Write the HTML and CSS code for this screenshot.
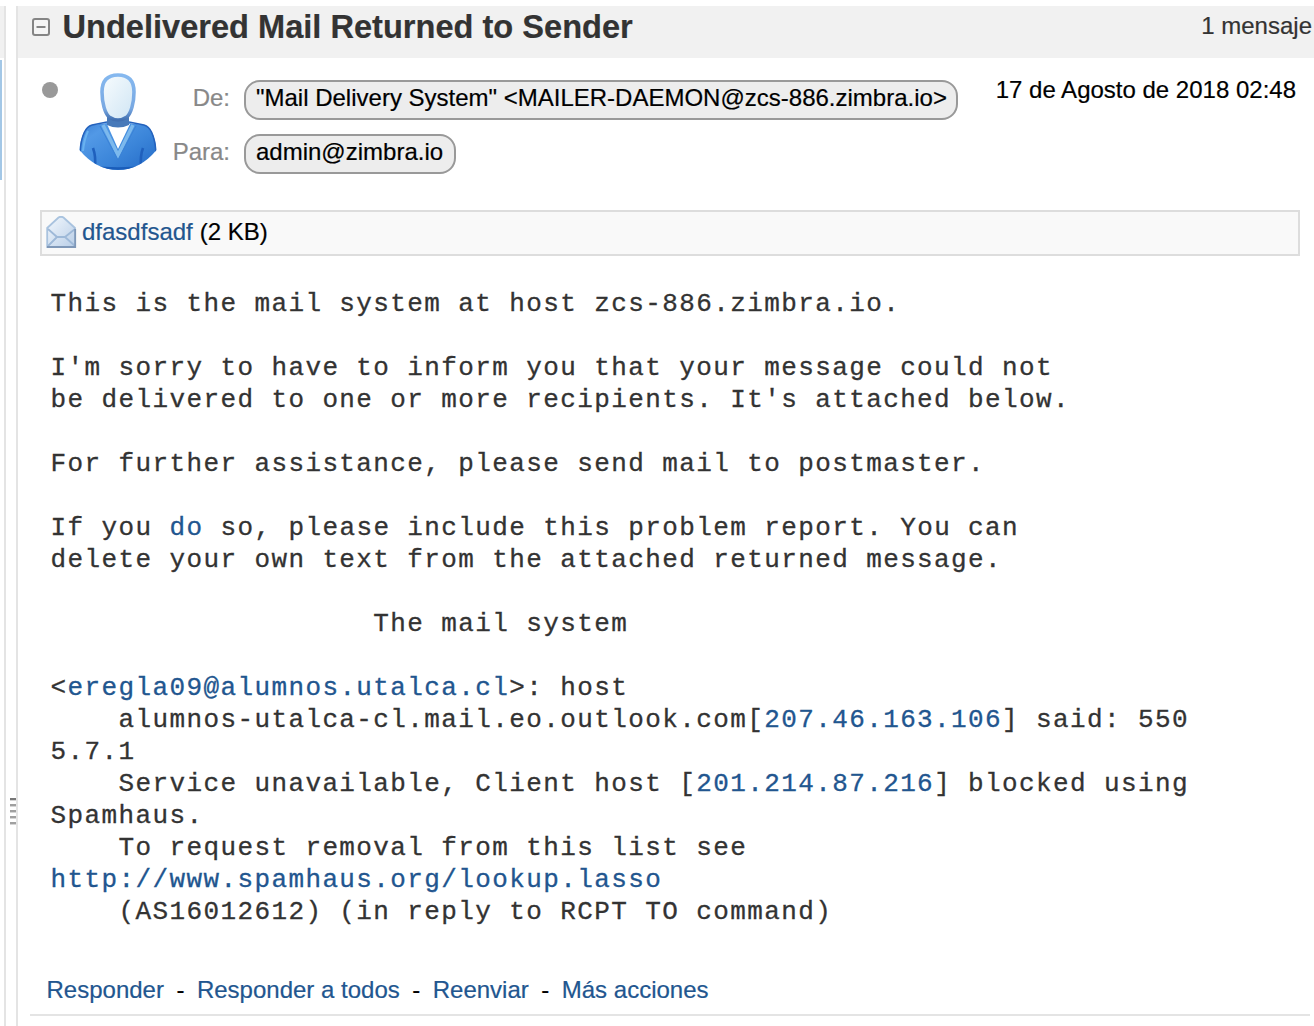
FILE: index.html
```html
<!DOCTYPE html>
<html lang="es">
<head>
<meta charset="utf-8">
<title>Undelivered Mail Returned to Sender</title>
<link rel="stylesheet" href="styles.css">
</head>
<body>
<div class="app">
  <aside class="list-edge">
    <div class="list-header"></div>
    <div class="list-selected"></div>
  </aside>
  <div class="sash"><div class="grip"><i></i><i></i><i></i><i></i><i></i></div></div>
  <main class="reader">
    <header class="subject-bar">
      <svg class="collapse" width="20" height="20" viewBox="0 0 20 20"><rect x="2" y="2" width="16" height="16" rx="2" fill="#f5f5f5" stroke="#858585" stroke-width="2"/><path d="M5.5 10h9" stroke="#858585" stroke-width="2"/></svg>
      <h1 class="subject">Undelivered Mail Returned to Sender</h1>
      <span class="count">1 mensaje</span>
    </header>
    <section class="envelope">
      <span class="read-dot"></span>
      <svg class="avatar" width="80" height="100" viewBox="0 0 80 100">
        <defs>
          <linearGradient id="suit" x1="0" y1="0" x2="1" y2="1"><stop offset="0" stop-color="#3679d0"/><stop offset=".25" stop-color="#5299e6"/><stop offset=".6" stop-color="#3b85d9"/><stop offset="1" stop-color="#2268c5"/></linearGradient>
          <linearGradient id="face" x1="0" y1="0" x2="1" y2="1"><stop offset="0" stop-color="#f8fcfe"/><stop offset="1" stop-color="#cfe5f4"/></linearGradient>
          <linearGradient id="rim" x1="0" y1="0" x2="0" y2="1"><stop offset="0" stop-color="#85b8ef"/><stop offset=".75" stop-color="#78a8e2"/><stop offset="1" stop-color="#416fb0"/></linearGradient>
          <clipPath id="bust"><path d="M1.5 0H78.5V78Q62 98 40 98Q18 98 1.5 78Z"/></clipPath>
        </defs>
        <g clip-path="url(#bust)">
          <path d="M29 46H51V51L66 53C74 55 78 68 79 82V100H1V82C2 68 6 55 14 53L29 51Z" fill="url(#suit)"/>
          <path d="M14 53L29 50M51 50L66 53C74 55 77 68 78 80M2 80C3 68 6 55 14 53" fill="none" stroke="#2462bd" stroke-width="1.6"/>
          <path d="M29 52L40 77L52 52Z" fill="#fff"/>
          <path d="M25 53L40 83L55 53" fill="none" stroke="#7cb9ed" stroke-width="3.5"/>
          <path d="M22 54L40 88L58 54" fill="none" stroke="#3a82d6" stroke-width="1"/>
          <path d="M15 76Q18 84 17 96M65 76Q62 84 63 96" fill="none" stroke="#1f60bd" stroke-width="2.6"/>
          <path d="M10 59Q6 68 5 79" fill="none" stroke="#68b2f0" stroke-width="2"/>
          <path d="M12 95Q40 98 68 95" fill="none" stroke="#1a5dba" stroke-width="2.5"/>
          <path d="M29 45H51V53Q40 58 29 53Z" fill="#4779b9"/>
        </g>
        <path d="M40 3C29 3 24 9 24 20C24 31 27 41 31 45Q40 51 49 45C53 41 56 31 56 20C56 9 51 3 40 3Z" fill="url(#face)" stroke="url(#rim)" stroke-width="3.6"/>
      </svg>
      <dl class="addresses">
        <dt>De:</dt><dd><span class="bubble">"Mail Delivery System" &lt;MAILER-DAEMON@zcs-886.zimbra.io&gt;</span></dd>
        <dt>Para:</dt><dd><span class="bubble short">admin@zimbra.io</span></dd>
      </dl>
      <time class="date">17 de Agosto de 2018 02:48</time>
    </section>
    <section class="attachment">
      <svg class="mail-icon" width="32" height="34" viewBox="0 0 32 34">
        <defs><linearGradient id="paper" x1="0" y1="0" x2="1" y2="1"><stop offset="0" stop-color="#f3f8fd"/><stop offset="1" stop-color="#b9cee7"/></linearGradient></defs>
        <path d="M1.2 12L12.5 1.5Q15 0 17.5 1.5L29 12V31H1.2Z" fill="url(#paper)" stroke="#a9c3df" stroke-width="1.8"/>
        <path d="M2 13L11 21H19L29 13M2 30L11 21M19 21L29 30" fill="none" stroke="#9eb9d8" stroke-width="1.8"/>
        <path d="M29.2 13V31H1" fill="none" stroke="#7f98b8" stroke-width="1.8"/>
      </svg>
      <a class="link">dfasdfsadf</a><span>(2 KB)</span>
    </section>
    <div class="body-text">
      <p>This is the mail system at host zcs-886.zimbra.io.</p>
      <p></p>
      <p>I'm sorry to have to inform you that your message could not</p>
      <p>be delivered to one or more recipients. It's attached below.</p>
      <p></p>
      <p>For further assistance, please send mail to postmaster.</p>
      <p></p>
      <p>If you <a class="link">do</a> so, please include this problem report. You can</p>
      <p>delete your own text from the attached returned message.</p>
      <p></p>
      <p>                   The mail system</p>
      <p></p>
      <p>&lt;<a class="link">eregla09@alumnos.utalca.cl</a>&gt;: host</p>
      <p>    alumnos-utalca-cl.mail.eo.outlook.com[<a class="link">207.46.163.106</a>] said: 550</p>
      <p>5.7.1</p>
      <p>    Service unavailable, Client host [<a class="link">201.214.87.216</a>] blocked using</p>
      <p>Spamhaus.</p>
      <p>    To request removal from this list see</p>
      <p><a class="link">http://www.spamhaus.org/lookup.lasso</a></p>
      <p>    (AS16012612) (in reply to RCPT TO command)</p>
    </div>
    <footer class="actions">
      <a class="link">Responder</a><span>-</span><a class="link">Responder a todos</a><span>-</span><a class="link">Reenviar</a><span>-</span><a class="link">Más acciones</a>
    </footer>
  </main>
</div>
</body>
</html>
```
FILE: styles.css
```css
* { box-sizing: border-box; }
body {
  margin: 0;
  background: #fff;
  color: #000;
  font: 24px/32px "Liberation Sans", Arial, sans-serif;
  overflow: hidden;
  -webkit-text-stroke: 0.2px;
}
.app { display: flex; height: 1026px; padding-top: 6px; }
.link { color: #22568f; text-decoration: none; }

.list-edge { width: 6px; border-right: 2px solid #e4e4e4; }
.list-header { height: 52px; background: #f1f1f1; }
.list-selected { width: 2px; height: 120px; margin-top: 2px; background: #a3c7e6; }
.sash {
  display: flex;
  width: 12px;
  padding: 792px 0 0 4px;
  border-right: 2px solid #e4e4e4;
}
.grip { display: flex; flex-direction: column; gap: 3px; width: 6px; flex: none; }
.grip i { height: 3px; background: #a0a0a0; border-bottom: 1px solid #d5d5d5; }
.grip i:first-child { background: #777; }

.reader { display: flex; flex-direction: column; flex: 1; min-width: 0; }
.subject-bar {
  display: flex;
  height: 52px;
  flex: none;
  padding: 0 2px 0 13px;
  background: #f1f1f1;
  color: #333;
}
.collapse { margin-top: 11px; flex: none; }
.subject {
  margin: 0 auto 0 11.5px;
  font-size: 32.6px;
  line-height: 42px;
  white-space: nowrap;
}
.count { line-height: 40px; }

.envelope { display: flex; height: 152px; flex: none; padding: 0 18px 0 24px; }
.read-dot { width: 16px; height: 16px; margin-top: 24px; border-radius: 50%; background: #999; }
.avatar { margin: 14px 0 0 20px; flex: none; }
.addresses {
  display: grid;
  grid-template-columns: 72px auto;
  grid-template-rows: 40px 40px;
  gap: 14px;
  align-self: flex-start;
  margin: 22px auto 0 0;
}
.addresses dt { color: #888; text-align: right; line-height: 36px; }
.addresses dd { margin: 0; }
.bubble {
  display: block;
  width: max-content;
  height: 40px;
  padding: 0 9px 0 10px;
  border: 2px solid #999;
  border-radius: 16px;
  background: #ededed;
  white-space: nowrap;
}
.bubble.short { padding-right: 11px; }
.date { margin-top: 16px; white-space: nowrap; }

.attachment {
  display: flex;
  height: 46px;
  flex: none;
  margin: 0 14px 0 22px;
  padding: 4px;
  border: 2px solid #ddd;
  background: #f9f9f9;
}
.mail-icon { margin-right: 4px; }
.attachment span { margin-left: 7px; }

.body-text {
  margin: 32px 0 0 32.5px;
  color: #333;
  font: 26px/32px "Liberation Mono", "Courier New", monospace;
  letter-spacing: 1.39px;
  -webkit-text-stroke: 0.3px;
}
.body-text p { height: 32px; margin: 0; white-space: pre; }
.actions {
  display: flex;
  gap: 12.5px;
  height: 88px;
  margin: 0 4px 0 12px;
  padding: 46px 0 0 16.5px;
  border-bottom: 2px solid #e4e4e4;
}
```
